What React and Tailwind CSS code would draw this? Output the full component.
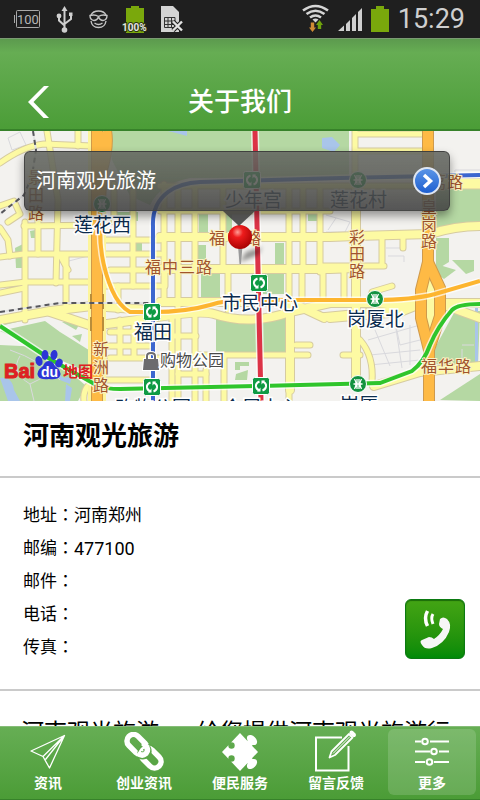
const contact = [
  { label: '地址', value: '河南郑州' },
  { label: '邮编', value: '477100', number: true },
  { label: '邮件', value: '' },
  { label: '电话', value: '' },
  { label: '传真', value: '' },
]

const tabs = [
  { label: '资讯', icon: PlaneIcon },
  { label: '创业资讯', icon: LinkIcon },
  { label: '便民服务', icon: PuzzleIcon },
  { label: '留言反馈', icon: EditIcon },
  { label: '更多', icon: SlidersIcon, active: true },
]

// Map geometry. The map's own coordinate space is 480 x 270, starting at y = 131.
const parks = [
  'M108 131H349V178H190Q160 184 150 205L130 196L112 160Z',
  'M436 186H480V223L436 230Z',
  'M480 311H455L436 346L432 364L478 366Z',
  'M0 331L45 321L60 332L92 352L88 372L60 360Z',
  'M0 345L42 347L86 386L78 401H0Z',
  'M216 319L250 324L285 318V353H216Z',
  'M201 274H220V299H201Z',
  'M263 273H284V294H263Z',
  'M436 238H449V262L436 270Z',
  'M440 400L480 374V401Z',
  'M198 245H206V263H198Z',
  'M199 213H208V232H199Z',
  'M226 213H232V232H226Z',
  'M275 243H284V264H275Z',
  'M0 316L52 306L60 312L0 326Z',
  'M30 231L41 229V238H31Z',
  'M15 248L23 244V268H16Z',
  'M116 212H124V224H116Z',
  'M134 238H142V252H134Z',
  'M235 362H249V366H240V370H235ZM236 374L248 370L247 380H235Z',
  'M436 264L456 270L444 279L437 274Z',
  'M452 260H474V271L466 274Z',
  'M308 212H317V221H308Z',
  'M120 212H138V221H120Z',
  'M62 322L82 320L76 330ZM72 336L82 334L80 342Z',
]

const water = [
  'M322 138L332 137L340 145L334 152L322 148Z',
  'M168 131H187V136L176 133Z',
  'M0 378Q12 376 14 390L20 401H8Z',
  'M66 384L72 388L70 401H65Z',
  'M475 301H478V364H475Z',
  'M56 372L64 378L72 376L70 384L60 380Z',
]

const minorRoads = [
  'M0 163Q24 146 44 144L92 146',
  'M47 131L58 200L56 283',
  'M78 131V146',
  'M0 206L14 201L20 214L8 222',
  'M0 228L8 240L10 256',
  'M0 257L24 254H160',
  'M25 222V320M38 214V254',
  'M24 226L100 225M100 240H160',
  'M66 256V306M60 255L68 270',
  'M133 186V286M114 184V222',
  'M0 285L26 282H94M0 293L24 288',
  'M110 270H165V286M118 286V310',
  'M104 286H160M110 332H152M110 358L160 358M120 320V358M134 320V356',
  'M108 346H152M84 401Q82 384 100 380H150',
  'M160 211H330M160 186H480M164 184V300M178 186V401M195 186V401M223 186V270M228 270V310M289 186V401M303 186V268',
  'M160 336H196M172 318V401M206 370V401M196 355H308',
  'M224 355V401M178 374H206',
  'M320 186V272M323 270V300M344 270V300M302 270V300',
  'M355 131V190M355 151H428M355 134H424',
  'M382 236V266M403 236V248M355 266H384M320 266H356',
  'M343 355H360M372 300V292L392 286',
  'M360 340Q374 356 372 382',
  'M320 316L424 306M296 345H310',
]

const roads = [
  'M160 237H330L356 236L430 234Q455 226 480 226',
  'M160 269H330L356 268',
  'M356 186V384',
  'M0 320L50 311L92 306L150 310',
  'M50 312L92 326L152 318',
  'M152 318Q200 310 214 314Q250 326 290 312L330 303H480',
  'M160 302H220L290 302L324 318',
  'M290 304V390',
  'M330 318L400 312L430 300L480 318',
  'M374 386L420 372L480 366',
  'M430 183H480',
]

const highways = [
  'M106 131Q109 145 102 170L100 200',
  'M97 131V401',
  'M428 131V262L421 290V318L429 350V401',
  'M428 262L440 288V316L429 350',
]

const railways = ['M33 131L36 150L32 176L24 195L0 214', 'M0 312L60 303L92 303H152']

const metroLines = [
  { d: 'M100 208V230Q100 262 112 290Q119 306 130 312H152Q186 312 210 305Q225 300 250 300H375Q412 300 435 294L480 281', className: 'stroke-[#fdb52f]', width: 4 },
  { d: 'M153 401V226Q152 204 168 192Q180 183 200 182L340 178L480 175', className: 'stroke-[#3c66cf]', width: 4 },
  { d: 'M255 131L258 270L261 401', className: 'stroke-[#dc3347]', width: 5 },
  { d: 'M0 326L50 359L98 386Q106 389 120 389L260 386L380 383L412 371Q424 362 430 345Q438 326 452 310Q458 304 480 304', className: 'stroke-[#2fc52c]', width: 4 },
]

const stations = [
  { name: '莲花西', x: 74, y: 232, at: [102, 204], round: true },
  { name: '少年宫', x: 225, y: 207, at: [252, 180] },
  { name: '莲花村', x: 330, y: 207, at: [358, 180], round: true },
  { name: '市民中心', x: 222, y: 310, at: [259, 283] },
  { name: '福田', x: 134, y: 339, at: [152, 312] },
  { name: '岗厦北', x: 347, y: 326, at: [375, 299], round: true },
  { name: '岗厦', x: 340, y: 412, at: [358, 384], round: true },
  { name: '购物公园', x: 115, y: 415, at: [152, 387] },
  { name: '会展中心', x: 223, y: 415, at: [261, 386] },
]

const streetNames = [
  { name: '福中三路', x: 145, y: 273, step: 17 },
  { name: '福中路', x: 209, y: 244, step: 18 },
  { name: '福华路', x: 421, y: 372, step: 17 },
  { name: '红荔路', x: 413, y: 188, step: 17 },
  { name: '彩田路', x: 349, y: 243, step: 17, vertical: true },
  { name: '皇岗路', x: 421, y: 213, step: 17, vertical: true },
  { name: '新洲路', x: 93, y: 355, step: 18, vertical: true },
  { name: '景田路', x: 28, y: 183, step: 18, vertical: true },
]

function StatusBar() {
  return (
    <div className="flex h-[38px] shrink-0 items-center justify-between bg-[#1f1f1f] pl-3.5 pr-[15px] text-[#cfcfcf]">
      <div className="flex items-center gap-3.5">
        <svg width="27" height="38" viewBox="14 0 27 38" fill="none" stroke="#a9a9a9">
          <rect x="16.500" y="10.500" width="23" height="17" rx="1" />
          <path d="M14.500 15V23" />
          <text x="17" y="24" className="fill-[#b5b5b5] stroke-none font-[Roboto,sans-serif] text-[13px]">100</text>
        </svg>
        <svg width="20" height="38" viewBox="54 0 20 38" fill="#cfcfcf" stroke="#cfcfcf" strokeWidth="2">
          <path d="M63.500 10V30M58 17V20.500L63.500 25.500M70 15V19L63.500 24" fill="none" />
          <path d="M63.500 6L66.500 11H60.500Z" stroke="none" />
          <circle cx="58" cy="16" r="2.400" stroke="none" />
          <path d="M68 12.500H71.500V16H68Z" stroke="none" />
          <circle cx="63.500" cy="30" r="2.800" stroke="none" />
        </svg>
        <svg width="19" height="38" viewBox="89 0 19 38" fill="none" stroke="#c4c4c4" strokeWidth="1.400">
          <path d="M91 15Q93 11 98.500 11T106 15M91 21Q92 27.500 98.500 27.500T106 21" />
          <path d="M90 15.500Q95 14 98.500 16.500Q102 14 107 15.500Q107 20 103 20.500Q100 20.500 98.500 17Q97 20.500 94 20.500Q90 20 90 15.500Z" />
          <path d="M94.500 23Q98.500 26 102.500 23" />
        </svg>
        <svg width="25" height="38" viewBox="122 0 25 38">
          <path d="M126 8H131V6H139V8H144V33H126Z" fill="#7aa80c" />
          <text x="122" y="31" paintOrder="stroke" className="fill-[#e4e4e4] stroke-[#2b3410] stroke-2 font-[Roboto,sans-serif] text-[10px] font-bold">100%</text>
        </svg>
        <svg width="22" height="38" viewBox="161 0 22 38">
          <path d="M161 6H173L179 12V32H161Z" fill="#d4d4d4" />
          <path d="M164.500 17.500H175V27.500H164.500ZM168 17V28M171.500 17V28M164 21H175M164 24.500H175" fill="none" stroke="#333" />
          <path d="M173 21.500L182 30.500M182 21.500L173 30.500" stroke="#1f1f1f" strokeWidth="4.500" />
          <path d="M173 21.500L182 30.500M182 21.500L173 30.500" stroke="#e2e2e2" strokeWidth="2.400" />
        </svg>
      </div>
      <div className="flex items-center gap-[9px]">
        <svg width="27" height="38" viewBox="302 0 27 38" fill="none" stroke="#d6d6d6" strokeWidth="2.600">
          <path d="M303 10.500Q315.500 1.500 328 10.500M306.500 14Q315.500 7.500 324.500 14M310 17.500Q315.500 13.500 321 17.500" />
          <path d="M312.500 19.500Q315.500 17.500 318.500 19.500L315.500 22.500Z" fill="#d6d6d6" stroke="none" />
          <path d="M310.800 22.500H314.200V27.500H316L312.500 32L309 27.500H310.800Z" fill="#d08b34" stroke="none" />
          <path d="M317.800 29H321.200V25H323L319.500 20L316 25H317.800Z" fill="#6fa20c" stroke="none" />
        </svg>
        <svg width="24" height="38" viewBox="339 0 24 38" fill="#cfcfcf">
          <path d="M339 31L345 25.500V31ZM347 24L351 20V31H347ZM353 18L357 14V31H353ZM359 12L363 8V31H359Z" />
        </svg>
        <svg width="18" height="38" viewBox="371 0 18 38">
          <path d="M371 9H376V6H384V9H389V32H371Z" fill="#7aa80c" />
        </svg>
        <span className="font-[Roboto,sans-serif] text-[27px] leading-[38px]">15:29</span>
      </div>
    </div>
  )
}

function StationMark({ at: [x, y], round }) {
  return (
    <g transform={`translate(${x} ${y})`}>
      {round ? (
        <>
          <circle r="8.500" fill="#12923f" stroke="#fff" />
          <path d="M-3.500 -5Q-0.500 0 -3.500 5M3.500 -5Q0.500 0 3.500 5M-4.500 0H4.500M-1 -5V5M1 -5V5" fill="none" stroke="#fff" strokeWidth="1.300" />
        </>
      ) : (
        <>
          <rect x="-8.500" y="-8.500" width="17" height="17" rx="2" fill="#0f9a44" stroke="#fff" />
          <path d="M-1.500 -4.500Q-5.500 -3 -5 0.500Q-4.500 3.500 -1.500 4.500M1.500 -4.500Q5.500 -3 5 0.500Q4.500 3.500 1.500 4.500" fill="none" stroke="#fff" strokeWidth="2" />
          <path d="M-4 5.500L-0.500 5.500L-0.500 1.500ZM4 -5.500L0.500 -5.500L0.500 -1.500Z" fill="#fff" />
        </>
      )}
    </g>
  )
}

function MapCanvas() {
  return (
    <svg
      viewBox="0 131 480 270"
      preserveAspectRatio="xMidYMid slice"
      className="block h-full w-full font-['Noto_Sans_CJK_SC',sans-serif]"
      fill="none"
    >
      <defs>
        <radialGradient id="pin" cx="0.4" cy="0.3" r="0.75">
          <stop offset="0" stopColor="#ff9d95" />
          <stop offset="0.3" stopColor="#ee1c1c" />
          <stop offset="1" stopColor="#a30000" />
        </radialGradient>
        <filter id="soft" x="-50%" y="-50%" width="200%" height="200%">
          <feGaussianBlur stdDeviation="2" />
        </filter>
      </defs>
      <rect y="131" width="480" height="270" fill="#f3f2ef" />
      {parks.map((d) => <path key={d} d={d} fill="#b5d8a3" />)}
      {water.map((d) => <path key={d} d={d} fill="#a9c5ea" />)}
      <path
        d="M8 138L20 132L26 145L12 150ZM370 326L395 322L400 345L420 340M368 340L420 325M370 355L420 350M375 330L390 366M395 322L402 368M410 325V365M370 365L420 360M386 248H400M388 256H404V262M455 170V182M455 170H480M65 262L88 256M10 350Q40 360 60 380M20 356Q10 372 30 384L50 374M30 384L34 401M462 345H474M326 215L350 222L345 232H326M328 230L336 218M462 349V365"
        stroke="#d9d9dd"
      />
      <g strokeLinejoin="round" strokeLinecap="round">
        {minorRoads.map((d) => <path key={d} d={d} stroke="#d6cba0" strokeWidth="7" />)}
        {roads.map((d) => <path key={d} d={d} stroke="#d6cba0" strokeWidth="10" />)}
        {minorRoads.map((d) => <path key={d} d={d} stroke="#fdfaa3" strokeWidth="5" />)}
        {roads.map((d) => <path key={d} d={d} stroke="#fdfaa3" strokeWidth="8" />)}
      </g>
      <path d="M97 131V401" stroke="#fdf59b" strokeWidth="18" />
      <path d="M428 272L440 290V316L429 340L420 316V290Z" fill="#fdfaa3" />
      {highways.map((d) => <path key={d} d={d} stroke="#cf9a4c" strokeWidth="12" />)}
      {highways.map((d) => <path key={d} d={d} stroke="#feba45" strokeWidth="10" />)}
      <path d="M97 294V309M97 317V331" stroke="#b98d3a" strokeWidth="14" />
      <path d="M97 290V335" stroke="#feba45" strokeWidth="10" />
      {railways.map((d) => (
        <g key={d}>
          <path d={d} stroke="#e4e4e4" strokeWidth="2" />
          <path d={d} stroke="#57575c" strokeWidth="2" strokeDasharray="5 4" />
        </g>
      ))}
      {metroLines.map((line) => (
        <g key={line.d}>
          <path d={line.d} stroke="#fff" strokeOpacity="0.7" strokeWidth={line.width + 3} />
          <path d={line.d} className={line.className} strokeWidth={line.width} />
        </g>
      ))}

      {stations.map((s) => <StationMark key={s.name} at={s.at} round={s.round} />)}

      {streetNames.map((street) => (
        <g key={street.name} paintOrder="stroke" className="fill-[#a1542c] stroke-[#fbf3c4] stroke-2 text-[16px]">
          {[...street.name].map((char, i) => (
            <text
              key={char}
              x={street.x + (street.vertical ? 0 : i * street.step)}
              y={street.y + (street.vertical ? i * street.step : 0)}
            >
              {char}
            </text>
          ))}
        </g>
      ))}

      <g paintOrder="stroke" className="fill-[#0b2b4d] stroke-white stroke-3 text-[19px]">
        {stations.map((s) => <text key={s.name} x={s.x} y={s.y}>{s.name}</text>)}
      </g>

      <g paintOrder="stroke">
        <path d="M147 361V356Q147 353 151 353T155 356V361" stroke="#fff" strokeWidth="4" />
        <path d="M144 359H158L159 370H143Z" fill="#6b6b6e" stroke="#fff" strokeWidth="2" />
        <path d="M147 362V356Q147 353 151 353T155 356V362" stroke="#6b6b6e" strokeWidth="2" />
      </g>
      <text x="160" y="366" paintOrder="stroke" className="fill-[#4a4a4a] stroke-white stroke-3 text-[16px]">购物公园</text>

      {/* Baidu mark */}
      <g fill="#2c36d6">
        <ellipse cx="39" cy="361" rx="3.500" ry="5" transform="rotate(-15 39 361)" />
        <ellipse cx="45" cy="355" rx="3.500" ry="5" />
        <ellipse cx="54" cy="355" rx="3.500" ry="5" transform="rotate(10 54 355)" />
        <ellipse cx="59" cy="363" rx="3.500" ry="4.500" transform="rotate(25 59 363)" />
        <path d="M49 361Q53 361 55 366Q62 371 60 376Q58 380 49 379Q40 380 38 376Q36 371 43 366Q45 361 49 361Z" />
      </g>
      <text x="41" y="377" className="fill-white font-['Liberation_Sans',sans-serif] text-[14px] font-bold">du</text>
      <text x="4" y="378" className="fill-[#dd2222] stroke-[#dd2222] font-['Liberation_Sans',sans-serif] text-[20px] font-bold">Bai</text>
      <text x="63" y="377" className="fill-[#dd2222] text-[15px] font-bold">地图</text>

      {/* Dropped pin */}
      <path d="M240 262L246 252L262 247L258 255Z" fill="#000" fillOpacity="0.4" filter="url(#soft)" />
      <path d="M238 246H242.500L241 264H239.500Z" fill="#9a9a9a" />
      <circle cx="240" cy="237" r="12" fill="url(#pin)" />
    </svg>
  )
}

function Callout() {
  return (
    <div className="absolute top-5 right-[30px] left-6 flex h-[60px] items-center justify-between rounded-md border border-[#3c3c3c]/80 bg-linear-to-b from-[#666963]/90 via-[#52534f]/85 to-[#444444]/90 pr-2 pl-[11px] shadow-[0_5px_10px_rgba(0,0,0,0.4)]">
      <span className="text-xl text-white">河南观光旅游</span>
      <button type="button" aria-label="查看详情" className="size-7 rounded-full border-2 border-[#dfe6f2] bg-linear-to-b from-[#5a94e6] to-[#1d5fd0]">
        <svg viewBox="0 0 24 24" className="size-6" fill="none" stroke="#fff" strokeWidth="3.500">
          <path d="M9 6L15.500 12L9 18" />
        </svg>
      </button>
      <svg width="32" height="16" viewBox="0 0 32 16" className="absolute top-full left-1/2 -translate-x-[14px]">
        <path d="M-1 0H33L16 16Z" fill="#444" fillOpacity="0.9" />
      </svg>
    </div>
  )
}

function PlaneIcon() {
  return (
    <svg viewBox="0 0 40 40" className="size-10" fill="none" stroke="#fff" strokeWidth="1.300" strokeLinejoin="round">
      <path d="M36.500 3.500L3 19L15 24.500L21.500 36L36.500 3.500L15 24.500M36.500 3.500L17.500 27.500" />
    </svg>
  )
}

function LinkIcon() {
  return (
    <svg viewBox="0 0 40 40" className="size-10" fill="none" strokeWidth="5.500">
      <rect x="1.500" y="6" width="23" height="13" rx="6.500" transform="rotate(45 13 12.500)" stroke="#fff" />
      <rect x="15.500" y="19.500" width="23" height="13" rx="6.500" transform="rotate(45 27 26)" stroke="#5ba647" strokeWidth="8" />
      <rect x="15.500" y="19.500" width="23" height="13" rx="6.500" transform="rotate(45 27 26)" stroke="#fff" />
      <path d="M22.500 15.500Q25 20 22 22.500Q19 24.500 15.500 22.500" stroke="#5ba647" strokeWidth="8" />
      <path d="M19 11L21 13Q25.500 17.500 22 21.500Q18 25 13.500 21" stroke="#fff" />
    </svg>
  )
}

function PuzzleIcon() {
  return (
    <svg viewBox="0 0 40 40" className="size-10" fill="#fff">
      <mask id="notches">
        <path d="M0 0H40V40H0Z" fill="#fff" />
        <path d="M7 9L12 14M7 31L12 26" stroke="#000" strokeWidth="3" />
        <circle cx="11.500" cy="13.500" r="3.200" fill="#000" />
        <circle cx="11.500" cy="26.500" r="3.200" fill="#000" />
      </mask>
      <path d="M20 1L38 20L20 39L2 20Z" mask="url(#notches)" />
      <path d="M25 12L29 7L34 12L29 16ZM25 28L29 33L34 28L29 24Z" />
      <ellipse cx="32" cy="8" rx="6" ry="4" transform="rotate(45 32 8)" />
      <ellipse cx="32" cy="32" rx="6" ry="4" transform="rotate(-45 32 32)" />
    </svg>
  )
}

function EditIcon() {
  return (
    <svg viewBox="0 0 40 40" className="size-10 overflow-visible" fill="none" stroke="#fff">
      <path d="M26 5.500H0V38.500H32.500V14" strokeWidth="2" />
      <path d="M13.500 25.500L15.500 19.500L33 2L36.500 5.500L19 23Z" strokeWidth="1.800" strokeLinejoin="round" />
      <path d="M17 21.500L34 4.500" strokeWidth="1" />
      <path d="M35.500 0.500L38 3" strokeWidth="4" strokeLinecap="round" />
    </svg>
  )
}

function SlidersIcon() {
  return (
    <svg viewBox="0 0 40 40" className="size-10" fill="none" stroke="#fff" strokeWidth="2">
      <path d="M3 9.500H9M18 9.500H37M3 19.500H18M27 19.500H37M3 30H13M22 30H37" />
      <circle cx="13" cy="9.500" r="2.800" />
      <circle cx="22" cy="19.500" r="2.800" />
      <circle cx="17.500" cy="30" r="2.800" />
    </svg>
  )
}

export default function App() {
  return (
    <div className="flex h-screen flex-col overflow-hidden bg-white font-[Roboto,'Noto_Sans_CJK_SC',sans-serif] text-black">
      <StatusBar />

      <header className="relative flex h-[93px] shrink-0 items-center justify-center border-t border-b-2 border-t-[#7b9a72] border-b-[#37822a] bg-linear-to-b from-[#5c9a4e] via-[#66ad53] via-15% to-[#4b9d37] pt-9">
        <button type="button" aria-label="返回" className="absolute bottom-2.5 left-6">
          <svg width="28" height="34" viewBox="0 0 28 34" fill="#fff">
            <path d="M20 1H25L9.500 17L25 33H19.500L4 17Z" />
          </svg>
        </button>
        <h1 className="text-[26px] leading-9 font-medium text-white">关于我们</h1>
      </header>

      <main className="min-h-0 flex-1 overflow-hidden">
        <section className="relative h-[270px] overflow-hidden">
          <MapCanvas />
          <Callout />
        </section>

        <h2 className="border-b-2 border-[#cacaca] px-[23px] pt-4 pb-[21px] text-[26px] leading-[38px] font-bold">河南观光旅游</h2>

        <section className="flex items-end justify-between border-b-2 border-[#cacaca] pt-[21px] pr-[15px] pb-[25px] pl-[23px]">
          <dl className="text-[17px] leading-[33px]">
            {contact.map((row) => (
              <div key={row.label} className="flex h-[33px]">
                <dt>{row.label}<span className="font-['Noto_Sans_CJK_TC',sans-serif] leading-none">：</span></dt>
                <dd className={row.number ? 'text-lg leading-[33px]' : ''}>{row.value}</dd>
              </div>
            ))}
          </dl>
          <button type="button" aria-label="拨打电话" className="mb-[5px] size-[60px] rounded-md border border-[#0b7a12] bg-linear-to-b from-[#43a414] to-[#008a08] shadow-[inset_0_1px_1px_rgba(0,70,0,0.6)]">
            <svg viewBox="1 1 58 58" fill="none" stroke="#fff">
              <path d="M35 20Q38 17 42 20Q47 25 44 33Q39 45 27 49Q20 51 17 46Q14 42 17 41L24 38Q27 38 29 40Q35 36 38 30Q34 28 34 25Z" fill="#f6f6f6" stroke="none" />
              <path d="M22.500 12Q18.500 19 22.500 27" strokeWidth="3.500" />
              <path d="M28 15Q25.500 19 28 25" strokeWidth="3" />
            </svg>
          </button>
        </section>

        <p className="flex gap-[38px] pt-6 pl-[21px] text-[23px] leading-9 whitespace-nowrap">
          <span>河南观光旅游</span>
          <span>给您提供河南观光旅游行</span>
        </p>
      </main>

      <nav className="grid h-[74px] shrink-0 grid-cols-5 border-t border-b border-t-[#86bd78] border-b-[#37822a] bg-linear-to-b from-[#66ae54] to-[#4b9c36]">
        {tabs.map(({ label, icon: TabIcon, active }) => (
          <button
            key={label}
            type="button"
            className={`mx-1 mt-0.5 mb-1 flex flex-col items-center gap-px rounded-md pt-[3px] text-sm leading-5 font-bold text-white ${active ? 'bg-white/15' : ''}`}
          >
            <TabIcon />
            <span>{label}</span>
          </button>
        ))}
      </nav>
    </div>
  )
}
